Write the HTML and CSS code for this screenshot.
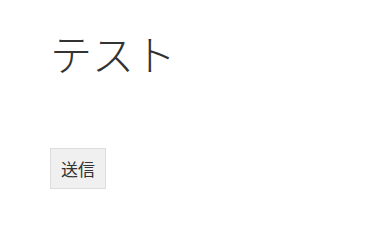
FILE: index.html
```html
<!DOCTYPE html>
<html lang="ja">
<head>
    <meta charset="UTF-8">
    <meta name="viewport" content="width=device-width, initial-scale=1.0">
    <title>テスト</title>
    <link rel="stylesheet" href="styles.css">
</head>
<body>
    <div class="container">
        <h1>テスト</h1>
        <button class="send-btn">送信</button>
    </div>
</body>
</html>
```
FILE: styles.css
```css
body {
    font-family: "Noto Sans CJK JP", sans-serif;
    margin: 0;
    padding: 0;
    background: #fff;
    color: #333;
}
.container {
    padding: 28px 50px;
}
h1 {
    font-size: 42px;
    font-weight: 300;
    margin: 0 0 70px 0;
    line-height: 1.2;
}
.send-btn {
    font-family: "Noto Sans CJK JP", sans-serif;
    font-size: 17px;
    color: #333;
    background: #f0f0f0;
    border: 1px solid #ddd;
    width: 56px;
    height: 41px;
    padding: 0;
}
```
